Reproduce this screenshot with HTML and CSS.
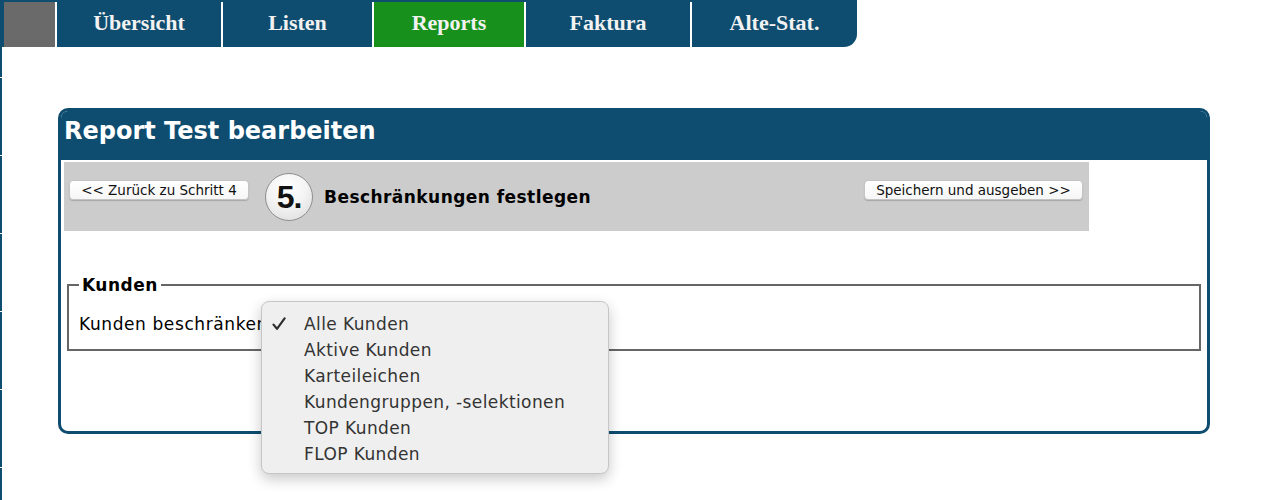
FILE: index.html
```html
<!DOCTYPE html>
<html lang="de">
<head>
<meta charset="utf-8">
<title>Report Test bearbeiten</title>
<link rel="stylesheet" href="styles.css">
</head>
<body>
<div class="page">
  <div class="rail"></div>
  <div class="main">
    <nav class="tabs">
      <div class="tab home"></div>
      <a class="tab t-uebersicht">Übersicht</a>
      <a class="tab t-listen">Listen</a>
      <a class="tab t-reports active">Reports</a>
      <a class="tab t-faktura">Faktura</a>
      <a class="tab t-alte last">Alte-Stat.</a>
    </nav>

    <section class="panel">
      <h1 class="panel-head">Report Test bearbeiten</h1>
      <div class="panel-body">
        <div class="stepbar">
          <button class="btn prev">&lt;&lt; Zurück zu Schritt 4</button>
          <div class="step-num">5.</div>
          <div class="step-title">Beschränkungen festlegen</div>
          <button class="btn next">Speichern und ausgeben &gt;&gt;</button>
        </div>

        <fieldset class="group">
          <legend>Kunden</legend>
          <div class="row">
            <span class="label">Kunden beschränken</span>
            <div class="menu">
              <div class="item checked"><span class="check"><svg class="check-icon" viewBox="0 0 14 14" width="14" height="14"><path d="M1.5 7.6 L5 11.8 L12.6 1.4" fill="none" stroke="#2e2e2e" stroke-width="2.2" stroke-linecap="round" stroke-linejoin="round"/></svg></span>Alle Kunden</div>
              <div class="item"><span class="check"></span>Aktive Kunden</div>
              <div class="item"><span class="check"></span>Karteileichen</div>
              <div class="item"><span class="check"></span>Kundengruppen, -selektionen</div>
              <div class="item"><span class="check"></span>TOP Kunden</div>
              <div class="item"><span class="check"></span>FLOP Kunden</div>
            </div>
          </div>
        </fieldset>
      </div>
    </section>
  </div>
</div>
</body>
</html>
```

FILE: styles.css
```css
html, body {
  margin: 0;
  padding: 0;
  background: #fff;
}

.page {
  display: flex;
  min-height: 100vh;
}

.rail {
  width: 2px;
  flex: 0 0 2px;
  background: repeating-linear-gradient(to bottom, #0e4d70 0 77px, #ffffff 77px 78px);
}

.main {
  flex: 1;
}

/* ---------- top navigation ---------- */
.tabs {
  display: flex;
  width: 855px;
  height: 47px;
  box-sizing: border-box;
  padding: 2px 0 0 2px;
  background: #0e4d70;
  border-bottom-right-radius: 13px;
}

.tab {
  display: block;
  box-sizing: border-box;
  height: 45px;
  line-height: 42px;
  text-align: center;
  color: #f2f2f2;
  font-family: "Liberation Serif", "Times New Roman", serif;
  font-weight: bold;
  font-size: 22px;
  border-left: 2px solid #ffffff;
  text-decoration: none;
}

.tab.home {
  width: 51px;
  background: #6a6a6a;
  border-left: 0;
}

.t-uebersicht { width: 166px; }
.t-listen { width: 151px; }
.t-reports { width: 152px; }
.t-faktura { width: 166px; }
.t-alte { width: 167px; }

.tab.last { border-bottom-right-radius: 13px; }

.tab.active {
  background: #17911b;
}

/* ---------- panel ---------- */
.panel {
  margin: 61px 0 0 56px;
  width: 1152px;
  box-sizing: border-box;
  border: 3px solid #0e4d70;
  border-radius: 10px;
  background: #fff;
}

.panel-head {
  margin: 0;
  height: 49px;
  box-sizing: border-box;
  padding: 5px 3px 0;
  background: #0e4d70;
  border-radius: 7px 7px 0 0;
  color: #ffffff;
  font-family: "DejaVu Sans", Verdana, sans-serif;
  font-weight: bold;
  font-size: 24px;
  line-height: 30px;
}

.panel-body {
  padding: 2px 3px 80px;
}

/* ---------- step bar ---------- */
.stepbar {
  display: flex;
  align-items: center;
  width: 1025px;
  height: 69px;
  box-sizing: border-box;
  padding: 0 6px 0 5px;
  background: #cccccc;
}

.btn {
  align-self: flex-start;
  margin-top: 18px;
  height: 20px;
  box-sizing: border-box;
  padding: 0;
  border: 1px solid #c4c4c4;
  border-radius: 4px;
  background: linear-gradient(#ffffff, #f6f6f6);
  box-shadow: 0 1px 1px rgba(0, 0, 0, 0.18);
  font-family: "DejaVu Sans", Verdana, sans-serif;
  font-size: 13.5px;
  line-height: 18px;
  color: #111;
  white-space: nowrap;
  text-align: center;
}

.btn.prev { width: 180px; }
.btn.next { width: 219px; margin-left: auto; }

.step-num {
  width: 48px;
  height: 48px;
  flex: 0 0 48px;
  box-sizing: border-box;
  margin-left: 16px;
  border: 1px solid #8f8f8f;
  border-radius: 50%;
  background: radial-gradient(circle at 45% 30%, #ffffff 0, #f4f4f4 45%, #d9d9d9 100%);
  font-family: "Liberation Sans", Arial, sans-serif;
  font-weight: bold;
  font-size: 32px;
  line-height: 46px;
  text-align: center;
  color: #111;
  letter-spacing: -1px;
}

.step-title {
  margin-left: 11px;
  font-family: "DejaVu Sans", Verdana, sans-serif;
  font-weight: bold;
  font-size: 17px;
  letter-spacing: 0.45px;
  color: #000;
}

/* ---------- fieldset ---------- */
.group {
  margin: 44px 3px 0;
  padding: 0 10px 12px;
  border: 2px solid #666666;
  min-width: 0;
  font-family: "DejaVu Sans", Verdana, sans-serif;
}

.group legend {
  padding: 0 3px;
  font-weight: bold;
  font-size: 17px;
  letter-spacing: 0.5px;
  line-height: 20px;
  color: #000;
}

.row {
  position: relative;
  padding-top: 16px;
  height: 26px;
  line-height: 26px;
  font-size: 17px;
  letter-spacing: 0.6px;
  color: #000;
}

/* ---------- open select menu (overlay) ---------- */
.menu {
  position: absolute;
  left: 182px;
  top: 6px;
  width: 348px;
  height: 173px;
  box-sizing: border-box;
  padding-top: 9px;
  background: #efefef;
  border: 1px solid #c6c6c6;
  border-radius: 8px;
  box-shadow: 0 5px 14px rgba(0, 0, 0, 0.22);
  font-family: "DejaVu Sans", Verdana, sans-serif;
  font-size: 17px;
  letter-spacing: 0.4px;
  color: #333;
  z-index: 2;
}

.item {
  display: flex;
  height: 26px;
  line-height: 26px;
  white-space: nowrap;
}

.check {
  display: flex;
  align-items: center;
  width: 42px;
  flex: 0 0 42px;
  padding-left: 10px;
  box-sizing: border-box;
}

.check-icon {
  display: block;
}
```
